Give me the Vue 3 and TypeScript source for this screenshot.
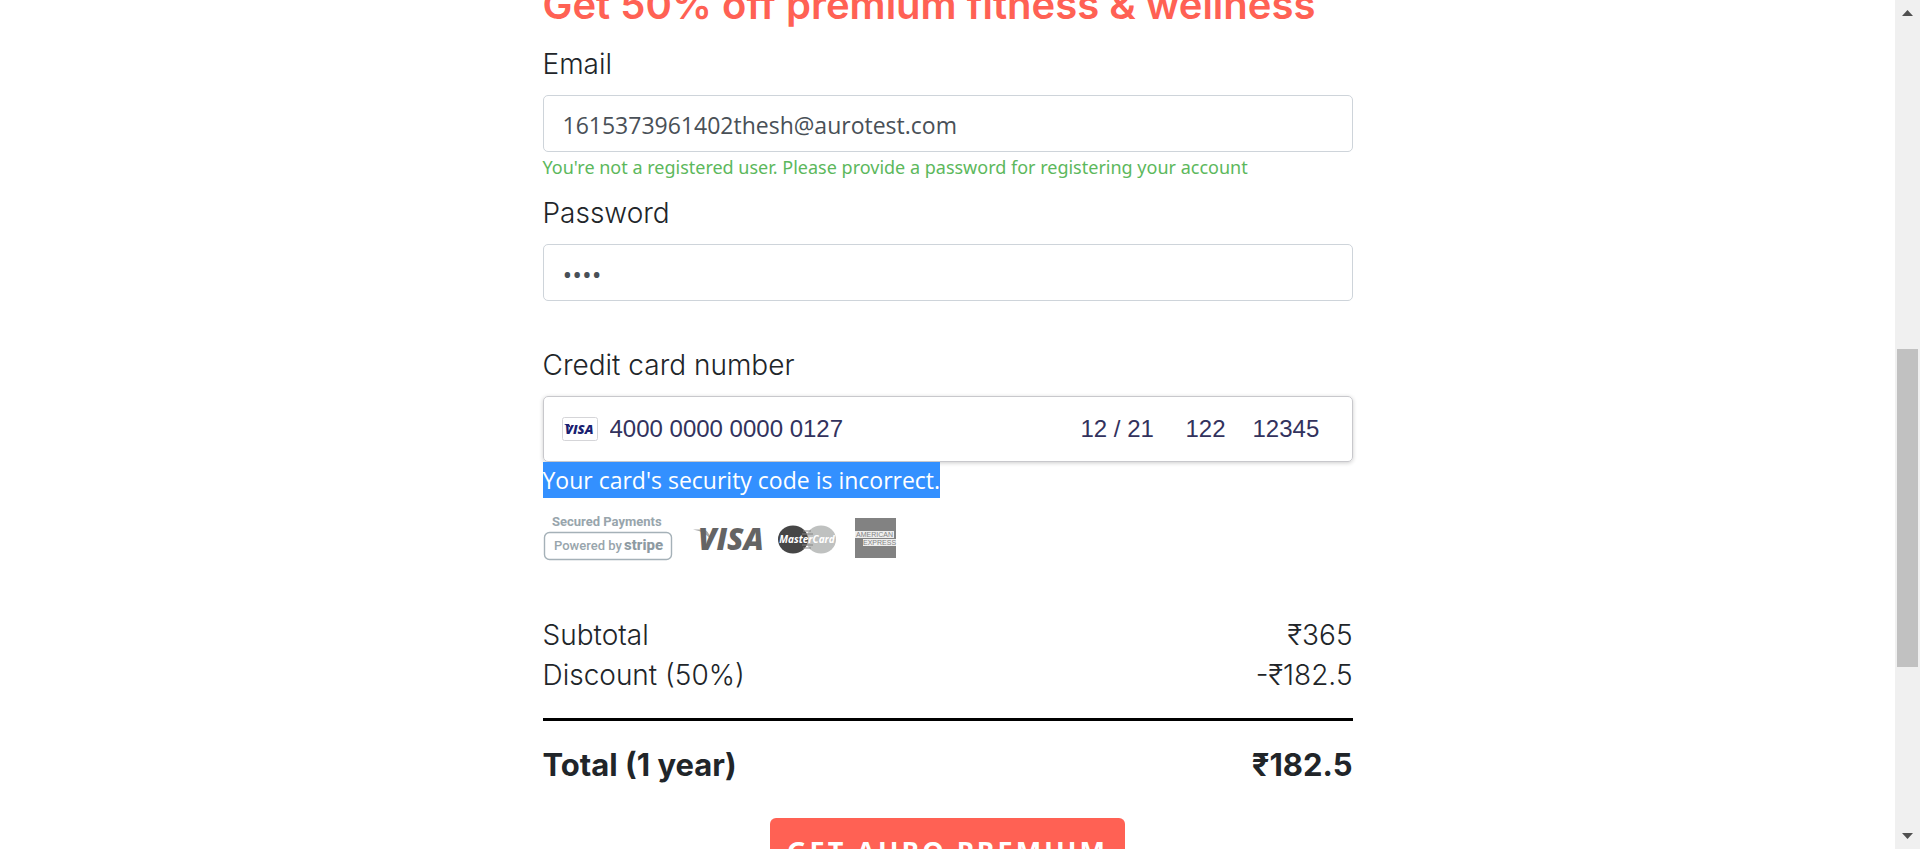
<script setup lang="ts">
import { ref } from 'vue'

interface PriceRow {
  label: string
  amount: string
}

const email = ref('1615373961402thesh@aurotest.com')
const password = ref('abcd')
const cardNumber = ref('4000 0000 0000 0127')
const expiry = ref('12 / 21')
const cvc = ref('122')
const postal = ref('12345')

const rows: PriceRow[] = [
  { label: 'Subtotal', amount: '₹365' },
  { label: 'Discount (50%)', amount: '-₹182.5' },
]
</script>

<template>
  <div class="page">
    <main class="content">
      <form class="checkout" @submit.prevent>
        <h1 class="title">Get 50% off premium fitness &amp; wellness</h1>

        <label class="label" for="email">Email</label>
        <input id="email" v-model="email" class="input" type="email" />
        <p class="hint">You're not a registered user. Please provide a password for registering your account</p>

        <label class="label" for="password">Password</label>
        <input id="password" v-model="password" class="input secret" type="password" />

        <label class="label card-label" for="card">Credit card number</label>
        <div class="card">
          <svg class="brand" viewBox="0 0 36 24" aria-hidden="true">
            <rect x="0.5" y="0.5" width="35" height="23" rx="2" fill="#fff" stroke="#d5d5d8" />
            <path d="M2 7h5l2 4z" fill="#1a1f71" />
            <text x="3" y="17" class="brand-text">VISA</text>
          </svg>
          <input id="card" v-model="cardNumber" class="cell number" type="text" />
          <input v-model="expiry" class="cell expiry" type="text" aria-label="Expiry date" />
          <input v-model="cvc" class="cell cvc" type="text" aria-label="Security code" />
          <input v-model="postal" class="cell postal" type="text" aria-label="Postal code" />
        </div>
        <p class="error"><span class="selected">Your card's security code is incorrect.</span></p>

        <svg class="logos" viewBox="0 0 360 60" role="img" aria-label="Accepted payment methods">
          <text x="9" y="22" class="secured">Secured Payments</text>
          <rect x="1.5" y="28.5" width="127" height="27" rx="5" fill="#fff" stroke="#a5b1b8" stroke-width="1.4" />
          <text x="11" y="46" class="powered">Powered by</text>
          <text x="81" y="46" class="stripe">stripe</text>

          <path d="M150 25.500H160Q166 26 168 36Q163 28 150 25.500Z" fill="#a9a9a9" />
          <text x="155" y="46" class="visa">VISA</text>

          <ellipse cx="278" cy="35.500" rx="15" ry="14" fill="#bfc1c0" />
          <ellipse cx="250" cy="35.500" rx="15" ry="14" fill="#464646" />
          <path d="M260 27h8M259 30h11M259 41h11M260 44h8" stroke="#858585" stroke-width="1" />
          <text x="264" y="39" class="mc">MasterCard</text>

          <rect x="312" y="14" width="41" height="40" fill="#828282" />
          <rect x="312" y="27" width="39" height="7" fill="#eee" />
          <rect x="320" y="35" width="33" height="7" fill="#eee" />
          <text x="313" y="33" class="amex">AMERICAN</text>
          <text x="320" y="41" class="amex">EXPRESS</text>
        </svg>

        <dl class="prices">
          <div v-for="row in rows" :key="row.label" class="row">
            <dt>{{ row.label }}</dt>
            <dd>{{ row.amount }}</dd>
          </div>
          <div class="row total">
            <dt>Total (1 year)</dt>
            <dd>₹182.5</dd>
          </div>
        </dl>

        <button class="submit" type="submit">GET AURO PREMIUM</button>
      </form>
    </main>

    <div class="scrollbar" aria-hidden="true">
      <svg class="arrow" viewBox="0 0 25 25"><path d="M7 16L12.500 10L18 16Z" fill="#505050" /></svg>
      <div class="track">
        <div class="before"></div>
        <div class="thumb"></div>
        <div class="after"></div>
      </div>
      <svg class="arrow" viewBox="0 0 25 25"><path d="M7 9H18L12.500 15Z" fill="#505050" /></svg>
    </div>
  </div>
</template>

<style>
body {
  background: #fff;
}
</style>

<style scoped>
* {
  box-sizing: border-box;
}

.page {
  display: grid;
  grid-template-columns: 1fr 25px;
  height: 100vh;
  overflow: hidden;
  color: #212529;
  font-family: Inter, "Noto Sans", sans-serif;
}

.content {
  min-width: 0;
  min-height: 0;
  overflow: hidden;
}

.checkout {
  display: flex;
  flex-direction: column;
  width: 100%;
  max-width: 810px;
  margin: -19px auto 0;
}

.title {
  margin: 0 0 15px;
  color: #ff6154;
  font-size: 40px;
  font-weight: 600;
  line-height: 48px;
  white-space: nowrap;
}

.label {
  margin-bottom: 11px;
  font-size: 28px;
  font-weight: 300;
  line-height: 40px;
}

.card-label {
  margin-top: 44px;
}

.input {
  width: 100%;
  height: 57px;
  padding: 2px 19px 0;
  border: 1px solid #ced4da;
  border-radius: 5px;
  outline: 0;
  background: #fff;
  color: #495057;
  font-family: "Open Sans", sans-serif;
  font-size: 23px;
}

.secret {
  font-size: 26px;
}

.hint {
  margin: 0 0 11px;
  color: #5cb85c;
  font-family: "Noto Sans", sans-serif;
  font-size: 18px;
  line-height: 30px;
  white-space: nowrap;
}

.card {
  display: flex;
  align-items: center;
  height: 66px;
  padding: 0 18px;
  border: 1px solid #c8c8cc;
  border-radius: 5px;
  box-shadow: 0 1px 4px rgba(0, 0, 0, 0.2);
}

.brand {
  flex: none;
  width: 36px;
  height: 24px;
  margin-right: 12px;
}

.brand-text {
  fill: #1a1f71;
  font: italic 800 13px "Open Sans", sans-serif;
}

.cell {
  min-width: 0;
  height: 36px;
  padding: 0;
  border: 0;
  outline: 0;
  background: transparent;
  color: #32325d;
  font-family: "Liberation Sans", Arial, sans-serif;
  font-size: 24px;
}

.number {
  flex: 1;
}

.expiry {
  width: 105px;
}

.cvc {
  width: 67px;
}

.postal {
  width: 81px;
}

.error {
  position: relative;
  margin: 0;
  font-family: "Open Sans", sans-serif;
  font-size: 23px;
  line-height: 36px;
}

.selected {
  display: inline-block;
  background: #3390ff;
  color: #fff;
}

.logos {
  width: 360px;
  height: 60px;
  margin-top: 6px;
}

.secured {
  fill: #98a5ac;
  font: 700 13px Roboto, sans-serif;
}

.powered {
  fill: #98a5ac;
  font: 500 13px Roboto, sans-serif;
}

.stripe {
  fill: #8d9aa2;
  font: 800 15px Roboto, sans-serif;
}

.visa {
  fill: #646464;
  font: italic 800 30px "Open Sans", sans-serif;
}

.mc {
  fill: #fff;
  font: italic 700 10px "Open Sans", sans-serif;
  text-anchor: middle;
}

.amex {
  fill: #828282;
  font: 400 7px "Liberation Sans", sans-serif;
}

.prices {
  margin: 51px 0 0;
  font-size: 28px;
  font-weight: 300;
  line-height: 40px;
}

.row {
  display: flex;
  justify-content: space-between;
}

.row dd {
  margin: 0;
}

.total {
  margin-top: 23px;
  padding-top: 20px;
  border-top: 3px solid #000;
  font-size: 31px;
  font-weight: 700;
  line-height: 48px;
}

.submit {
  align-self: center;
  height: 64px;
  margin-top: 29px;
  padding: 0 17px;
  border: 0;
  border-radius: 6px;
  background: #ff6154;
  color: #fff;
  font-family: "Open Sans", sans-serif;
  font-size: 27px;
  font-weight: 700;
  letter-spacing: 3px;
  white-space: nowrap;
}

.scrollbar {
  display: flex;
  flex-direction: column;
  min-height: 0;
  background: #f0f0f0;
}

.arrow {
  flex: none;
  width: 25px;
  height: 25px;
}

.track {
  display: flex;
  flex: 1;
  flex-direction: column;
  padding: 0 2px;
}

.before {
  flex: 324;
}

.thumb {
  flex: 318;
  background: #c1c1c1;
}

.after {
  flex: 157;
}
</style>
